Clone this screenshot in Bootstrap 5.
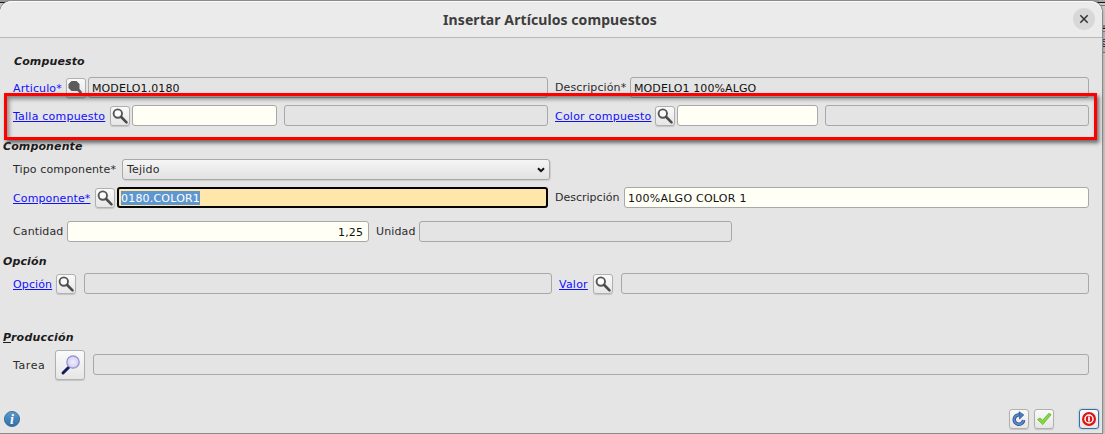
<!DOCTYPE html>
<html lang="es">
<head>
<meta charset="utf-8">
<title>Insertar Artículos compuestos</title>
<link rel="stylesheet" href="https://cdn.jsdelivr.net/npm/bootstrap@5.3.0/dist/css/bootstrap.min.css">
<style>
html,body{height:100%;overflow:hidden}
body{background:#c9cac2;font-family:"DejaVu Sans",sans-serif;font-size:11px;line-height:14px;color:#2b2b2b}
.backdrop-strip{right:0;top:0;width:6px;height:53px;background:linear-gradient(#aaa 0 2px,#151515 2px 3px,#ccc 3px 5px,#777 5px 6px,#ccc 6px 25px,#888 25px 28px,#111 28px 29px,#ccc 29px 31px,#777 31px 32px,#b9b9b9 32px 52px,#777 52px)}
.backdrop-top{left:0;top:0;width:100%;height:12px;background:linear-gradient(#999 0 2px,#151515 2px 3px,#ccc 3px)}
.backdrop-text{left:2px;top:35px;color:#1d3350;text-decoration:underline}
.dialog-win{width:1102px;height:432px;margin-top:1px;background:#e5e5e5;border-radius:12px 12px 0 0;box-shadow:0 0 0 1px #8b8b8b,0 1px 4px rgba(0,0,0,.35)}
.titlebar{height:37px;background:#ebebeb;border-bottom:1px solid #b9b9b9;border-radius:12px 12px 0 0;box-shadow:inset 0 1px #fafafa}
.titlebar h1{font:700 14px/18px "Noto Sans",sans-serif;margin:2px 2px 0 0;color:#3d3d3d;letter-spacing:.08px}
.btn-x{right:7px;top:7px;width:22px;height:22px;border-radius:50%;background:#d8d8d8;padding:0;border:0;display:flex;align-items:center;justify-content:center}
.sect{font-weight:700;font-style:italic;font-size:11px;line-height:14px;height:14px;margin:0 0 0 3px;color:#1c1c1c;letter-spacing:.12px}
.frow{display:flex;align-items:center;height:21px;margin-left:13px}
.lbl{flex:none;white-space:nowrap;height:16px;line-height:16px;letter-spacing:.12px}
a.lbl{color:#1010ff;text-decoration:underline;text-underline-offset:1px;line-height:18px}
.lbl.wide-set{letter-spacing:.22px}
.fld{flex:none;height:21px;border:1px solid #a8a8a8;border-radius:3px;background:#e4e4e4;padding:2px 5px 0 3px;line-height:17px;color:#111;white-space:nowrap;letter-spacing:.1px}
.fld.edit{background:#fffff6}
.fld.active-fld{background:#ffe7ab;border:2px solid #050505;padding:1px 2px}
.sel-text{background:#5e97d0;color:#fff;display:inline-block;height:14px;line-height:15px;vertical-align:top;margin-top:1px;letter-spacing:.2px}
.tool{flex:none;width:20px;height:20px;border:1px solid #b0b0b0;border-radius:3px;background:linear-gradient(#fafafa,#e6e6e6);padding:0;display:flex;align-items:center;justify-content:center;box-shadow:0 1px 1px rgba(0,0,0,.14)}
.frow .tool{margin-top:1px}
.combo{flex:none;width:428px;height:21px;border:1px solid #a8a8a8;border-radius:3px;background:linear-gradient(#f5f5f5,#e2e2e2);padding:0 4px;display:flex;align-items:center;justify-content:space-between;box-shadow:1px 1px 1px rgba(0,0,0,.1);letter-spacing:.2px}
.marker{left:4px;top:93px;width:1093px;height:47px;border:3px solid #f00;box-shadow:2px 3px 4px rgba(0,0,0,.55),inset 2px 3px 4px rgba(0,0,0,.42);pointer-events:none}
</style>
<script src="https://cdn.jsdelivr.net/npm/bootstrap@5.3.0/dist/js/bootstrap.bundle.min.js"></script>
</head>
<body class="position-relative">
<svg width="0" height="0" class="position-absolute"><defs>
<symbol id="lens" viewBox="0 0 18 18"><circle cx="6.8" cy="6.6" r="4.2" fill="#fcfcfc" stroke="#555" stroke-width="1.9"/><path d="M10.200 10l5.300 5.300" stroke="#4a4a4a" stroke-width="2.600" stroke-linecap="round"/></symbol>
</defs></svg>
<div class="backdrop-top position-absolute"></div>
<div class="backdrop-strip position-absolute overflow-hidden"><span class="backdrop-text position-absolute">e</span></div>
<main class="dialog-win position-relative">
<header class="titlebar position-relative d-flex align-items-center justify-content-center"><h1>Insertar Artículos compuestos</h1>
<button class="btn-x position-absolute" aria-label="Cerrar"><svg width="10" height="10" viewBox="0 0 10 10"><path d="M1.3 1.3l7.4 7.4M8.7 1.3L1.3 8.7" stroke="#333" stroke-width="1.5"/></svg></button></header>

<div class="sect" style="margin:17px 0 8px 14px">Compuesto</div>
<div class="frow"><a class="lbl text-decoration-none" style="width:53px">Articulo*</a><button class="tool"><svg width="18" height="18" viewBox="0 0 18 18"><path d="M4.500 2h5l3 3v5l2.300 2.500v2.500h-1.500L10.500 12h-6l-3-3V5z" fill="#5c5c5c"/></svg></button><div class="fld" style="width:460px;margin-left:2px">MODELO1.0180</div><span class="lbl" style="width:75px;margin-left:7px">Descripción*</span><div class="fld" style="width:459px">MODELO1 100%ALGO</div></div>
<div class="frow" style="margin-top:7px"><a class="lbl wide-set" href="#" style="width:97px">Talla compuesto</a><button class="tool"><svg width="18" height="18"><use href="#lens"/></svg></button><div class="fld edit" style="width:145px;margin-left:2px"></div><div class="fld" style="width:264px;margin-left:7px"></div><a class="lbl wide-set" href="#" style="width:100px;margin-left:7px">Color compuesto</a><button class="tool"><svg width="18" height="18"><use href="#lens"/></svg></button><div class="fld edit" style="width:141px;margin-left:2px"></div><div class="fld" style="width:264px;margin-left:7px"></div></div>

<div class="sect" style="margin-top:14px">Componente</div>
<div class="frow" style="margin-top:5px"><span class="lbl" style="width:109px">Tipo componente*</span><div class="combo"><span>Tejido</span><svg width="8" height="6" viewBox="0 0 8 6"><path d="M1 1.200l3 3 3-3" fill="none" stroke="#111" stroke-width="2"/></svg></div></div>
<div class="frow" style="margin-top:7px"><a class="lbl" href="#" style="width:82px">Componente*</a><button class="tool"><svg width="18" height="18"><use href="#lens"/></svg></button><div class="fld active-fld" style="width:431px;margin-left:2px"><span class="sel-text">0180.COLOR1</span></div><span class="lbl" style="width:69px;margin-left:7px;letter-spacing:0">Descripción</span><div class="fld edit" style="width:465px;letter-spacing:.25px">100%ALGO COLOR 1</div></div>
<div class="frow" style="margin-top:13px"><span class="lbl" style="width:54px">Cantidad</span><div class="fld edit text-end" style="width:302px">1,25</div><span class="lbl" style="width:43px;margin-left:7px">Unidad</span><div class="fld" style="width:313px"></div></div>

<div class="sect" style="margin-top:13px">Opción</div>
<div class="frow" style="margin-top:4px"><a class="lbl" href="#" style="width:43px">Opción</a><button class="tool"><svg width="18" height="18"><use href="#lens"/></svg></button><div class="fld" style="width:468px;margin-left:8px"></div><a class="lbl wide-set" href="#" style="width:34px;margin-left:7px">Valor</a><button class="tool"><svg width="18" height="18"><use href="#lens"/></svg></button><div class="fld" style="width:468px;margin-left:8px"></div></div>

<div class="sect" style="margin-top:37px;letter-spacing:.22px"><u>P</u>roducción</div>
<div class="frow" style="height:30px;margin-top:5px"><span class="lbl" style="width:42px;letter-spacing:.6px;line-height:18px">Tarea</span><button class="tool" style="width:30px;height:30px;margin:0"><svg width="28" height="28" viewBox="0 0 28 28"><defs><radialGradient id="glass"><stop stop-color="#f4eeff"/><stop offset="1" stop-color="#d3c9f2"/></radialGradient></defs><path d="M12.500 16.500L7 22" stroke="#101c5c" stroke-width="3" stroke-linecap="round"/><circle cx="17" cy="11" r="6.200" fill="url(#glass)" stroke="#8d92c4" stroke-width="1.200"/></svg></button><div class="fld" style="width:996px;margin-left:8px;margin-bottom:1px"></div></div>

<footer class="d-flex align-items-center" style="height:20px;margin:29px 3px 0 4px">
<svg width="16" height="16" viewBox="0 0 16 16"><defs><linearGradient id="blue" x2="0" y2="1"><stop stop-color="#5f9ccb"/><stop offset="1" stop-color="#2d6ca5"/></linearGradient></defs><circle cx="8" cy="8" r="7.600" fill="url(#blue)" stroke="#2b6496" stroke-width=".8"/><text x="8" y="12.500" text-anchor="middle" font-family="Liberation Serif,serif" font-weight="700" font-style="italic" font-size="14" fill="#fff">i</text></svg>
<button class="tool ms-auto"><svg width="18" height="18" viewBox="0 0 18 18"><path d="M13.600 10A4.700 4.700 0 1 1 9.500 4.900" fill="none" stroke="#254985" stroke-width="3.400"/><path d="M13.600 10A4.700 4.700 0 1 1 9.500 4.900" fill="none" stroke="#5b8bd4" stroke-width="1.900"/><path d="M9 1.700l4.800 3.200L9.600 9z" fill="#4b7cc8" stroke="#254985" stroke-width=".7"/></svg></button>
<button class="tool" style="margin-left:5px"><svg width="18" height="18" viewBox="0 0 18 18"><path d="M2.500 9.500l2.500-1.500 2.500 2.300 6.400-7 2.200 1.300-8.300 10z" fill="#83d83d" stroke="#5fb52b" stroke-width=".8" stroke-linejoin="round"/></svg></button>
<button class="tool" style="margin-left:25px;border-color:#3c6d9d;box-shadow:0 0 2px #6fa3d4"><svg width="18" height="18" viewBox="0 0 18 18"><circle cx="9" cy="9" r="7" fill="#df1414"/><circle cx="9" cy="9" r="4" fill="#d91515" stroke="#fff" stroke-width="1.500"/><path d="M9 6.500v5" stroke="#fff" stroke-width="1.700"/></svg></button>
</footer>
</main>
<div class="marker position-absolute"></div>
</body>
</html>
